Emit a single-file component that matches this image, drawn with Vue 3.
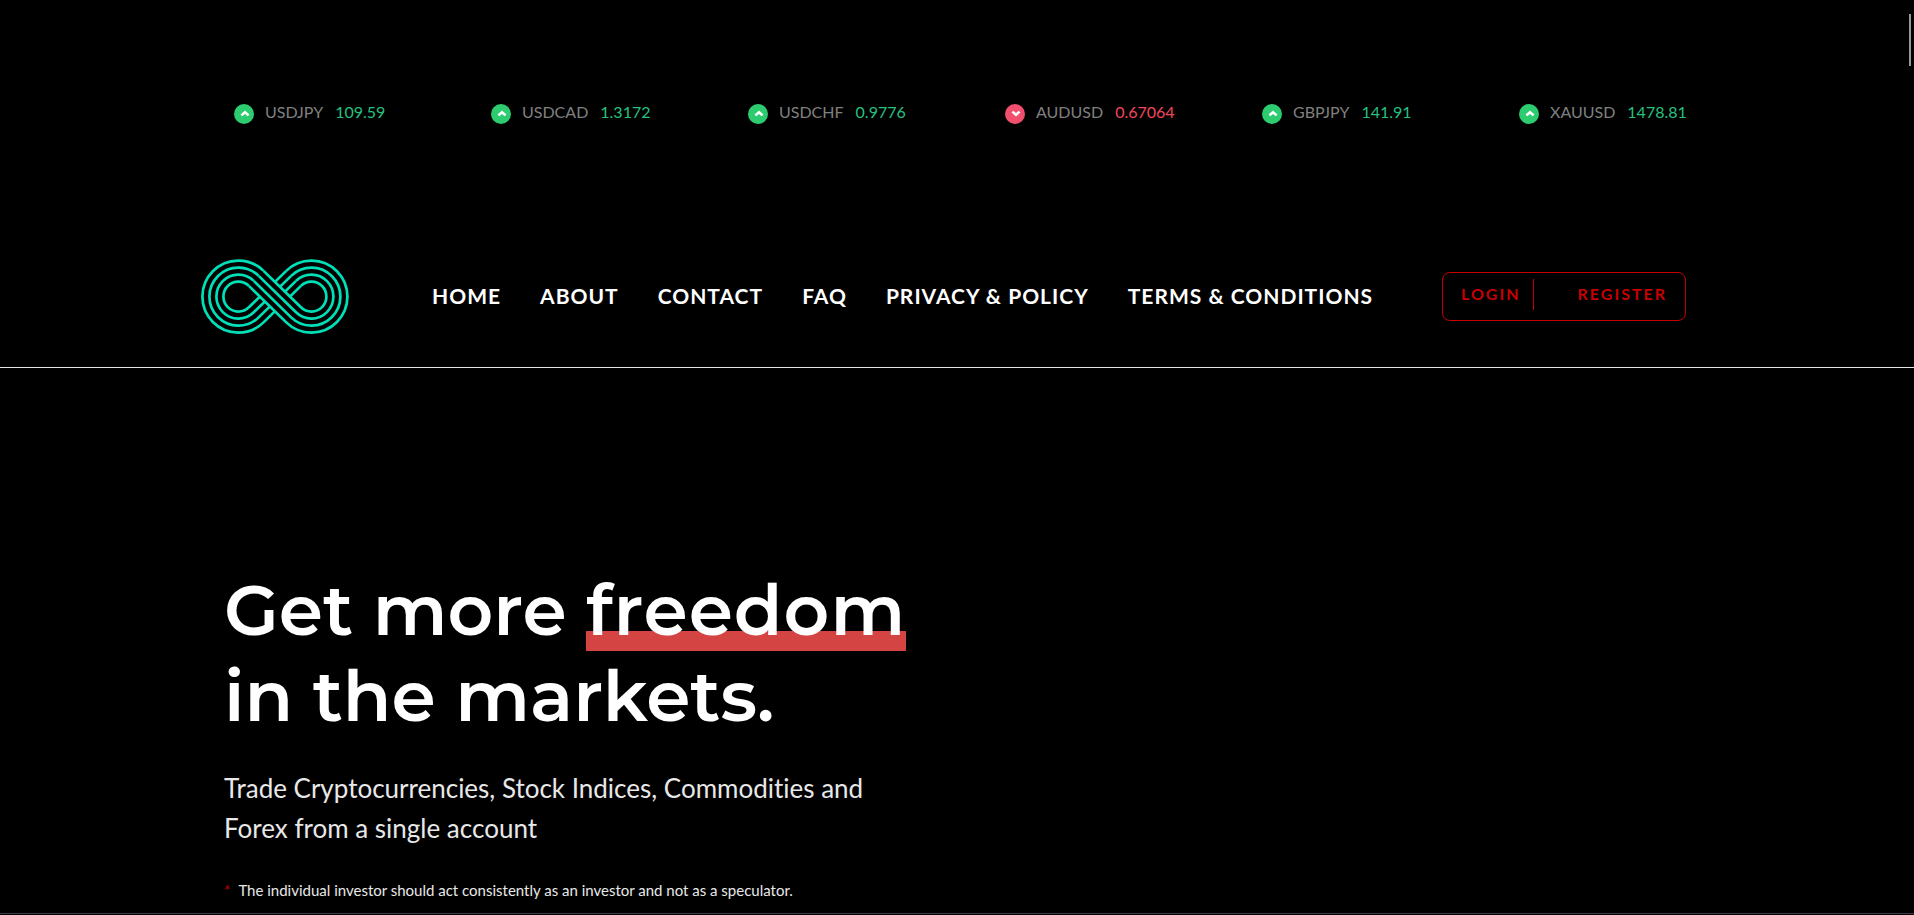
<script setup>
const quotes = [
  { pair: 'USDJPY', price: '109.59', up: true },
  { pair: 'USDCAD', price: '1.3172', up: true },
  { pair: 'USDCHF', price: '0.9776', up: true },
  { pair: 'AUDUSD', price: '0.67064', up: false },
  { pair: 'GBPJPY', price: '141.91', up: true },
  { pair: 'XAUUSD', price: '1478.81', up: true },
]

const links = ['Home', 'About', 'Contact', 'FAQ', 'Privacy & Policy', 'Terms & Conditions']

// Infinity mark: four strands, each one wide on one loop and tight on the other
const left = 38
const right = 111
const middle = 38
const cos = 51 / (right - left)
const sin = Math.sqrt(1 - cos * cos)
const radii = [36, 29, 22, 15]

function strand(r) {
  const s = 51 - r
  const ax = left + r * cos
  const bx = right - s * cos
  return {
    over: `M${ax} ${middle - r * sin}L${bx} ${middle + s * sin}A${s} ${s} 0 1 0 ${bx} ${middle - s * sin}`,
    under: `M${ax} ${middle - r * sin}A${r} ${r} 0 1 0 ${ax} ${middle + r * sin}L${bx} ${middle - s * sin}`,
  }
}

const strands = radii.map(strand)
const band = [
  [left + 36 * cos, middle - 36 * sin],
  [right - 15 * cos, middle + 15 * sin],
  [right - 36 * cos, middle + 36 * sin],
  [left + 15 * cos, middle - 15 * sin],
].map((point) => point.join(',')).join(' ')
</script>

<template>
  <div class="page">
    <ul class="ticker">
      <li v-for="quote in quotes" :key="quote.pair" class="quote" :class="{ down: !quote.up }">
        <svg class="arrow" viewBox="0 0 20 20" aria-hidden="true">
          <circle cx="10" cy="10" r="10" />
          <path :d="quote.up ? 'M7.4 11.4L11 8.2L14.6 11.4' : 'M7.4 7.6L11 10.8L14.6 7.6'" />
        </svg>
        <span class="pair">{{ quote.pair }}</span>
        <span class="price">{{ quote.price }}</span>
      </li>
    </ul>

    <header class="header">
      <div class="header-inner">
        <a class="logo" href="#" aria-label="Home page">
          <svg viewBox="0.6 -0.6 149 76" aria-hidden="true">
            <path v-for="(item, index) in strands" :key="`under-${index}`" :d="item.under" />
            <polygon :points="band" />
            <path v-for="(item, index) in strands" :key="`over-${index}`" :d="item.over" />
          </svg>
        </a>
        <nav class="nav">
          <a v-for="link in links" :key="link" href="#">{{ link }}</a>
        </nav>
        <div class="account">
          <a class="login" href="#">Login</a>
          <a class="register" href="#">Register</a>
        </div>
      </div>
    </header>

    <main class="hero">
      <div class="hero-inner">
        <h1>Get more <span class="marked">freedom</span><br />in the markets.</h1>
        <p class="lead">Trade Cryptocurrencies, Stock Indices, Commodities and<br />Forex from a single account</p>
        <p class="note"><span class="star">*</span>The individual investor should act consistently as an investor and not as a speculator.</p>
      </div>
    </main>

    <div class="scroll-thumb" aria-hidden="true"></div>
  </div>
</template>

<style>
body {
  margin: 0;
  background: #000;
}
</style>

<style scoped>
.page {
  position: relative;
  display: flex;
  flex-direction: column;
  box-sizing: border-box;
  min-height: 100vh;
  padding-bottom: 1px;
  background: #000;
  color: #fff;
  font-family: Lato, "Liberation Sans", sans-serif;
}

a {
  color: inherit;
  text-decoration: none;
}

.ticker {
  display: grid;
  grid-template-columns: repeat(6, 1fr);
  box-sizing: border-box;
  width: 100%;
  max-width: 1638px;
  margin: 0 auto;
  padding: 100px 0 0 96px;
  list-style: none;
}

.quote {
  display: flex;
  align-items: center;
  height: 24px;
  font-size: 16px;
  line-height: 24px;
}

.arrow {
  width: 20px;
  height: 20px;
  margin: 4px 11px 0 0;
}

.arrow circle {
  fill: #2ecc71;
}

.arrow path {
  fill: none;
  stroke: #fff;
  stroke-width: 2.6;
}

.pair {
  margin-right: 12px;
  color: #808080;
}

.price {
  color: #26c281;
}

.down .arrow circle {
  fill: #f04f6e;
}

.down .price {
  color: #f6465d;
}

.header {
  padding: 134px 0 33px;
  border-bottom: 1px solid #e5e5e5;
}

.header-inner {
  display: flex;
  align-items: center;
  width: 100%;
  max-width: 1512px;
  margin: 0 auto;
}

.logo {
  flex: none;
  width: 149px;
  height: 76px;
}

.logo svg {
  display: block;
  width: 100%;
  height: 100%;
}

.logo path {
  fill: none;
  stroke: #00e0b8;
  stroke-width: 2.7;
}

.nav {
  display: flex;
  gap: 39px;
  margin-left: 82px;
  font-size: 21px;
  font-weight: 700;
  line-height: 24px;
  letter-spacing: 1px;
  text-transform: uppercase;
  white-space: nowrap;
}

.account {
  display: flex;
  box-sizing: border-box;
  height: 49px;
  margin: 0 27px 0 auto;
  padding: 6px 18px 10px;
  border: 1px solid #c80000;
  border-radius: 8px;
  color: #c80000;
  font-size: 16px;
  font-weight: 700;
  line-height: 30px;
  letter-spacing: 2px;
  text-transform: uppercase;
}

.login {
  padding-right: 12px;
  border-right: 1px solid #c80000;
}

.register {
  padding-left: 44px;
}

.hero {
  flex: 1;
  padding: 199px 0 10px;
  border-bottom: 1px solid #44394a;
}

.hero-inner {
  width: 100%;
  max-width: 1466px;
  margin: 0 auto;
}

h1 {
  margin: 0;
  font-family: Montserrat, Inter, "Liberation Sans", sans-serif;
  font-size: 71px;
  font-weight: 600;
  line-height: 86px;
}

.marked {
  background: linear-gradient(#d34443, #d34443) 0 calc(100% - 2px) / 100% 20px no-repeat;
  letter-spacing: 1px;
}

.lead {
  margin: 29px 0 0;
  color: #e8e8e8;
  font-size: 26px;
  font-variant-ligatures: none;
  line-height: 40px;
}

.note {
  margin: 30px 0 0;
  color: #e8e8e8;
  font-size: 15px;
  line-height: 24px;
}

.star {
  margin-right: 8px;
  color: #c80000;
}

.scroll-thumb {
  position: absolute;
  top: 14px;
  right: 3px;
  width: 2px;
  height: 52px;
  background: #999;
}
</style>
